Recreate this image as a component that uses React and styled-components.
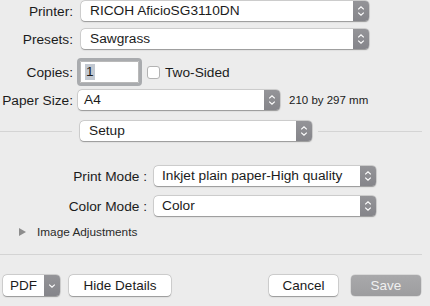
import React from "react";
import styled, { createGlobalStyle } from "styled-components";

const Global = createGlobalStyle`
  html, body {
    margin: 0;
    padding: 0;
    background: #ececec;
  }
  body {
    width: 430px;
    height: 306px;
    overflow: hidden;
    font-family: "Liberation Sans", Arial, sans-serif;
    font-size: 13.7px;
    color: #1b1b1b;
  }
`;

const Dialog = styled.div`
  display: flex;
  flex-direction: column;
  width: 430px;
  height: 306px;
`;

const TopGrid = styled.div`
  display: grid;
  grid-template-columns: 73px auto;
  column-gap: 8px;
  align-items: center;
  justify-items: start;
  margin-top: 1px;
`;

const Label = styled.div`
  justify-self: end;
  white-space: nowrap;
  margin-top: ${(p) => p.$mt || 0}px;
`;

const Cell = styled.div`
  display: flex;
  align-items: center;
  margin-top: ${(p) => p.$mt || 0}px;
  margin-left: ${(p) => p.$ml || 0}px;
`;

const SelectBox = styled.div`
  display: flex;
  height: 20px;
  width: ${(p) => p.$w}px;
  background: #fff;
  border-radius: 4px;
  overflow: hidden;
  box-shadow: 0 0 0 0.5px rgba(0, 0, 0, 0.18), 0 0.6px 1.2px rgba(0, 0, 0, 0.3);
`;

const SelectText = styled.div`
  flex: 1;
  line-height: 20px;
  padding-left: ${(p) => p.$pad || 9}px;
  white-space: nowrap;
  overflow: hidden;
`;

const Stepper = styled.div`
  width: 16px;
  display: flex;
  align-items: center;
  justify-content: center;
  background: linear-gradient(#949498, #85858a);
`;

const Chevrons = () => (
  <svg width="8" height="12" viewBox="0 0 8 12">
    <path d="M1.2 4.4 L4 1.8 L6.8 4.4" fill="none" stroke="#fff" strokeWidth="1.2" />
    <path d="M1.2 7.6 L4 10.2 L6.8 7.6" fill="none" stroke="#fff" strokeWidth="1.2" />
  </svg>
);

const Select = ({ width, pad, children }) => (
  <SelectBox $w={width}>
    <SelectText $pad={pad}>{children}</SelectText>
    <Stepper>
      <Chevrons />
    </Stepper>
  </SelectBox>
);

const NumberField = styled.div`
  width: 59px;
  height: 22px;
  box-sizing: border-box;
  background: #fff;
  border: 1px solid #b9b9b9;
  outline: 3px solid #a9abae;
  outline-offset: -0.5px;
  border-radius: 1px;
  display: flex;
  align-items: center;
  padding-left: 4px;
  margin-left: -1px;
`;

const Selected = styled.span`
  background: #c3c9d1;
  padding: 0 1px;
  line-height: 16px;
`;

const Check = styled.div`
  width: 13px;
  height: 13px;
  box-sizing: border-box;
  background: #fff;
  border: 1px solid #b3b3b3;
  border-radius: 3px;
  margin-left: 8px;
  margin-right: 5px;
`;

const Note = styled.span`
  font-size: 11.5px;
  margin-left: 9px;
`;

const RuleRow = styled.div`
  display: flex;
  align-items: center;
  margin-top: 11px;
  padding-right: 8px;
`;

const Line = styled.div`
  height: 1px;
  background: #d4d4d4;
  width: ${(p) => (p.$w ? `${p.$w}px` : "auto")};
  flex: ${(p) => (p.$w ? "none" : 1)};
  margin-left: ${(p) => p.$ml || 0}px;
  margin-right: ${(p) => p.$mr || 0}px;
`;

const ModeGrid = styled.div`
  display: grid;
  grid-template-columns: 147px auto;
  column-gap: 7px;
  row-gap: 10px;
  align-items: center;
  justify-items: start;
  margin-top: 25px;
`;

const Disclosure = styled.div`
  display: flex;
  align-items: center;
  gap: 11px;
  margin: 9px 0 0 19px;
  font-size: 11.8px;
  color: #2a2a2a;
  height: 14px;
`;

const Triangle = styled.div`
  width: 0;
  height: 0;
  border-top: 4.5px solid transparent;
  border-bottom: 4.5px solid transparent;
  border-left: 7px solid #8d8d8d;
`;

const Separator = styled.div`
  height: 1px;
  background: #d4d4d4;
  width: 422px;
  margin-top: 15px;
`;

const ButtonBar = styled.div`
  display: flex;
  align-items: center;
  margin-top: 20px;
  padding: 0 9px 0 3px;
`;

const Button = styled.div`
  height: 21px;
  width: ${(p) => p.$w}px;
  box-sizing: border-box;
  border-radius: 4px;
  display: flex;
  align-items: center;
  justify-content: center;
  font-size: 13.5px;
  margin-left: ${(p) => p.$ml || 0}px;
  background: ${(p) => (p.$disabled ? "linear-gradient(#a9a9ab, #9d9d9f)" : "#fff")};
  color: ${(p) => (p.$disabled ? "#f0f0f0" : "#1b1b1b")};
  box-shadow: ${(p) =>
    p.$disabled
      ? "0 0 0 0.5px rgba(0,0,0,0.15)"
      : "0 0 0 0.5px rgba(0,0,0,0.18), 0 0.6px 1.2px rgba(0,0,0,0.3)"};
`;

const Spacer = styled.div`
  flex: 1;
`;

const PdfButton = styled.div`
  display: flex;
  height: 21px;
  width: 57px;
  border-radius: 4px;
  overflow: hidden;
  background: #fff;
  box-shadow: 0 0 0 0.5px rgba(0, 0, 0, 0.18), 0 0.6px 1.2px rgba(0, 0, 0, 0.3);
  font-size: 13.5px;
`;

const PdfLabel = styled.div`
  flex: 1;
  display: flex;
  align-items: center;
  justify-content: center;
`;

export default function App() {
  return (
    <>
      <Global />
      <Dialog>
        <TopGrid>
          <Label>Printer:</Label>
          <Select width={288}>RICOH AficioSG3110DN</Select>

          <Label $mt={8}>Presets:</Label>
          <Cell $mt={8}>
            <Select width={288}>Sawgrass</Select>
          </Cell>

          <Label $mt={12}>Copies:</Label>
          <Cell $mt={12}>
            <NumberField>
              <Selected>1</Selected>
            </NumberField>
            <Check />
            Two-Sided
          </Cell>

          <Label $mt={7}>Paper Size:</Label>
          <Cell $mt={7} $ml={-3}>
            <Select width={202} pad={6}>A4</Select>
            <Note>210 by 297 mm</Note>
          </Cell>
        </TopGrid>

        <RuleRow>
          <Line $w={72} $mr={8} />
          <Select width={232}>Setup</Select>
          <Line $ml={6} />
        </RuleRow>

        <ModeGrid>
          <Label>Print Mode :</Label>
          <Select width={222} pad={8}>Inkjet plain paper-High quality</Select>
          <Label>Color Mode :</Label>
          <Select width={222} pad={8}>Color</Select>
        </ModeGrid>

        <Disclosure>
          <Triangle />
          Image Adjustments
        </Disclosure>

        <Separator />

        <ButtonBar>
          <PdfButton>
            <PdfLabel>PDF</PdfLabel>
            <Stepper>
              <svg width="8" height="6" viewBox="0 0 8 6">
                <path d="M1.2 1.6 L4 4.2 L6.8 1.6" fill="none" stroke="#fff" strokeWidth="1.2" />
              </svg>
            </Stepper>
          </PdfButton>
          <Button $w={102} $ml={9}>Hide Details</Button>
          <Spacer />
          <Button $w={69}>Cancel</Button>
          <Button $w={70} $ml={13} $disabled>Save</Button>
        </ButtonBar>
      </Dialog>
    </>
  );
}
